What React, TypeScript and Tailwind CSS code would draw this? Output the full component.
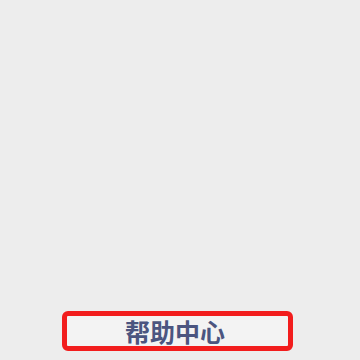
export default function App() {
  return (
    <div className="flex h-[360px] w-[360px] flex-col justify-end bg-[#ededed] pb-[9px]">
      <div className="ml-[62px] flex h-[40px] w-[231px] items-center justify-center rounded-[6px] border-[5px] border-[#f21d1d] bg-[#f3f3f3] pr-[5px]">
        <span className="font-['Noto_Sans_CJK_SC','Noto_Sans',sans-serif] text-[25px] font-bold leading-none text-[#4b5580]">
          帮助中心
        </span>
      </div>
    </div>
  );
}
